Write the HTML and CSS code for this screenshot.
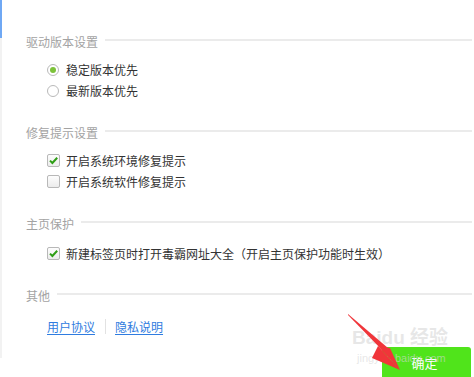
FILE: index.html
```html
<!DOCTYPE html>
<html lang="zh-CN">
<head>
  <meta charset="UTF-8">
  <title>设置</title>
  <link rel="stylesheet" href="styles.css">
</head>
<body>
  <div class="rail">
    <div class="rail-active"></div>
    <div class="rail-rest"></div>
  </div>

  <div class="panel">
    <div class="section">
      <div class="section-title"><span>驱动版本设置</span></div>
      <div class="options">
        <label class="option"><span class="radio checked"></span>稳定版本优先</label>
        <label class="option"><span class="radio"></span>最新版本优先</label>
      </div>
    </div>

    <div class="section">
      <div class="section-title"><span>修复提示设置</span></div>
      <div class="options">
        <label class="option"><span class="check checked">
          <svg viewBox="0 0 13 13" width="13" height="13"><path d="M3 6.6 L5.4 9 L10.2 3.8" fill="none" stroke="#2f9e16" stroke-width="2"/></svg>
        </span>开启系统环境修复提示</label>
        <label class="option"><span class="check"></span>开启系统软件修复提示</label>
      </div>
    </div>

    <div class="section">
      <div class="section-title"><span>主页保护</span></div>
      <div class="options options-loose">
        <label class="option"><span class="check checked">
          <svg viewBox="0 0 13 13" width="13" height="13"><path d="M3 6.6 L5.4 9 L10.2 3.8" fill="none" stroke="#2f9e16" stroke-width="2"/></svg>
        </span>新建标签页时打开毒霸网址大全（开启主页保护功能时生效）</label>
      </div>
    </div>

    <div class="section">
      <div class="section-title"><span>其他</span></div>
      <div class="options options-links">
        <div class="links">
          <a href="#">用户协议</a>
          <span class="sep"></span>
          <a href="#">隐私说明</a>
        </div>
      </div>
    </div>

    <div class="footer">
      <button class="ok">确定</button>
    </div>
  </div>

  <!-- watermark + annotation arrow from the original screenshot -->
  <div class="watermark">
    <span class="wm-big">Baidu 经验</span>
    <span class="wm-small">jingyan.baidu.com</span>
  </div>
  <svg class="arrow" width="80" height="60" viewBox="0 0 80 60">
    <polygon points="0,0 40,34 36,38 0,1" fill="#f0353a"/>
    <polygon points="30,32 52,56 42,34" fill="#f0353a"/>
    <polygon points="30,32 52,56 24,44" fill="#f0353a"/>
  </svg>
</body>
</html>
```

FILE: styles.css
```css
html, body {
  margin: 0;
  height: 100%;
  background: #fff;
}
body {
  display: flex;
  font-family: "Noto Sans CJK SC", "Liberation Sans", sans-serif;
  font-size: 12px;
  color: #333;
  overflow: hidden;
}
.rail {
  width: 2px;
  display: flex;
  flex-direction: column;
}
.rail-active {
  height: 38px;
  background: #6fa8f4;
}
.rail-rest {
  height: 320px;
  background: #f2f2f2;
}
.panel {
  flex: 1;
  padding: 34px 2px 0 24px;
}
.section {
  margin-bottom: 24px;
}
.section-title {
  display: flex;
  align-items: center;
  height: 16px;
  line-height: 16px;
  color: #a3a3a3;
}
.section-title::after {
  content: "";
  flex: 1;
  height: 2px;
  background: #ebebeb;
  margin-left: 7px;
  margin-top: -5px;
}
.options {
  margin-top: 9px;
  padding-left: 21px;
}
.options-loose {
  margin-top: 11px;
}
.options-links {
  margin-top: 12px;
}
.option {
  display: flex;
  align-items: center;
  height: 21px;
  line-height: 21px;
}
.radio {
  width: 10px;
  height: 10px;
  border: 1px solid #b9b9b9;
  border-radius: 50%;
  background: #fff;
  margin-right: 7px;
  position: relative;
}
.radio.checked::after {
  content: "";
  position: absolute;
  left: 2px;
  top: 2px;
  width: 6px;
  height: 6px;
  border-radius: 50%;
  background: #7cc23a;
}
.check {
  width: 13px;
  height: 13px;
  box-sizing: border-box;
  border: 1px solid #b8b8b8;
  border-radius: 2px;
  background: linear-gradient(#fdfdfd, #ececec);
  margin-right: 6px;
  display: flex;
}
.check svg {
  margin: -1px;
}
.links {
  display: flex;
  align-items: center;
  height: 21px;
}
.links a {
  color: #2f7ce0;
  text-decoration: underline;
  text-underline-offset: 2px;
}
.sep {
  width: 1px;
  height: 15px;
  background: #e2e2e2;
  margin: 0 9px 0 10px;
}
.footer {
  display: flex;
  justify-content: flex-end;
  margin-top: -14px;
  padding-right: 1px;
}
.ok {
  width: 89px;
  height: 34px;
  border: none;
  border-radius: 3px;
  background: #50e41b;
  color: #fff;
  font-family: inherit;
  font-size: 13px;
  padding: 0 4px 4px 0;
}
.watermark {
  position: absolute;
  left: 352px;
  top: 326px;
  display: flex;
  flex-direction: column;
  color: rgba(215, 215, 215, 0.6);
  pointer-events: none;
}
.wm-big {
  font-family: "Liberation Sans", "Noto Sans CJK SC", sans-serif;
  font-size: 19px;
  font-weight: bold;
  line-height: 24px;
}
.wm-small {
  font-family: "Liberation Sans", sans-serif;
  font-size: 11px;
  line-height: 16px;
  padding-left: 5px;
}
.arrow {
  position: absolute;
  left: 348px;
  top: 314px;
}
```
